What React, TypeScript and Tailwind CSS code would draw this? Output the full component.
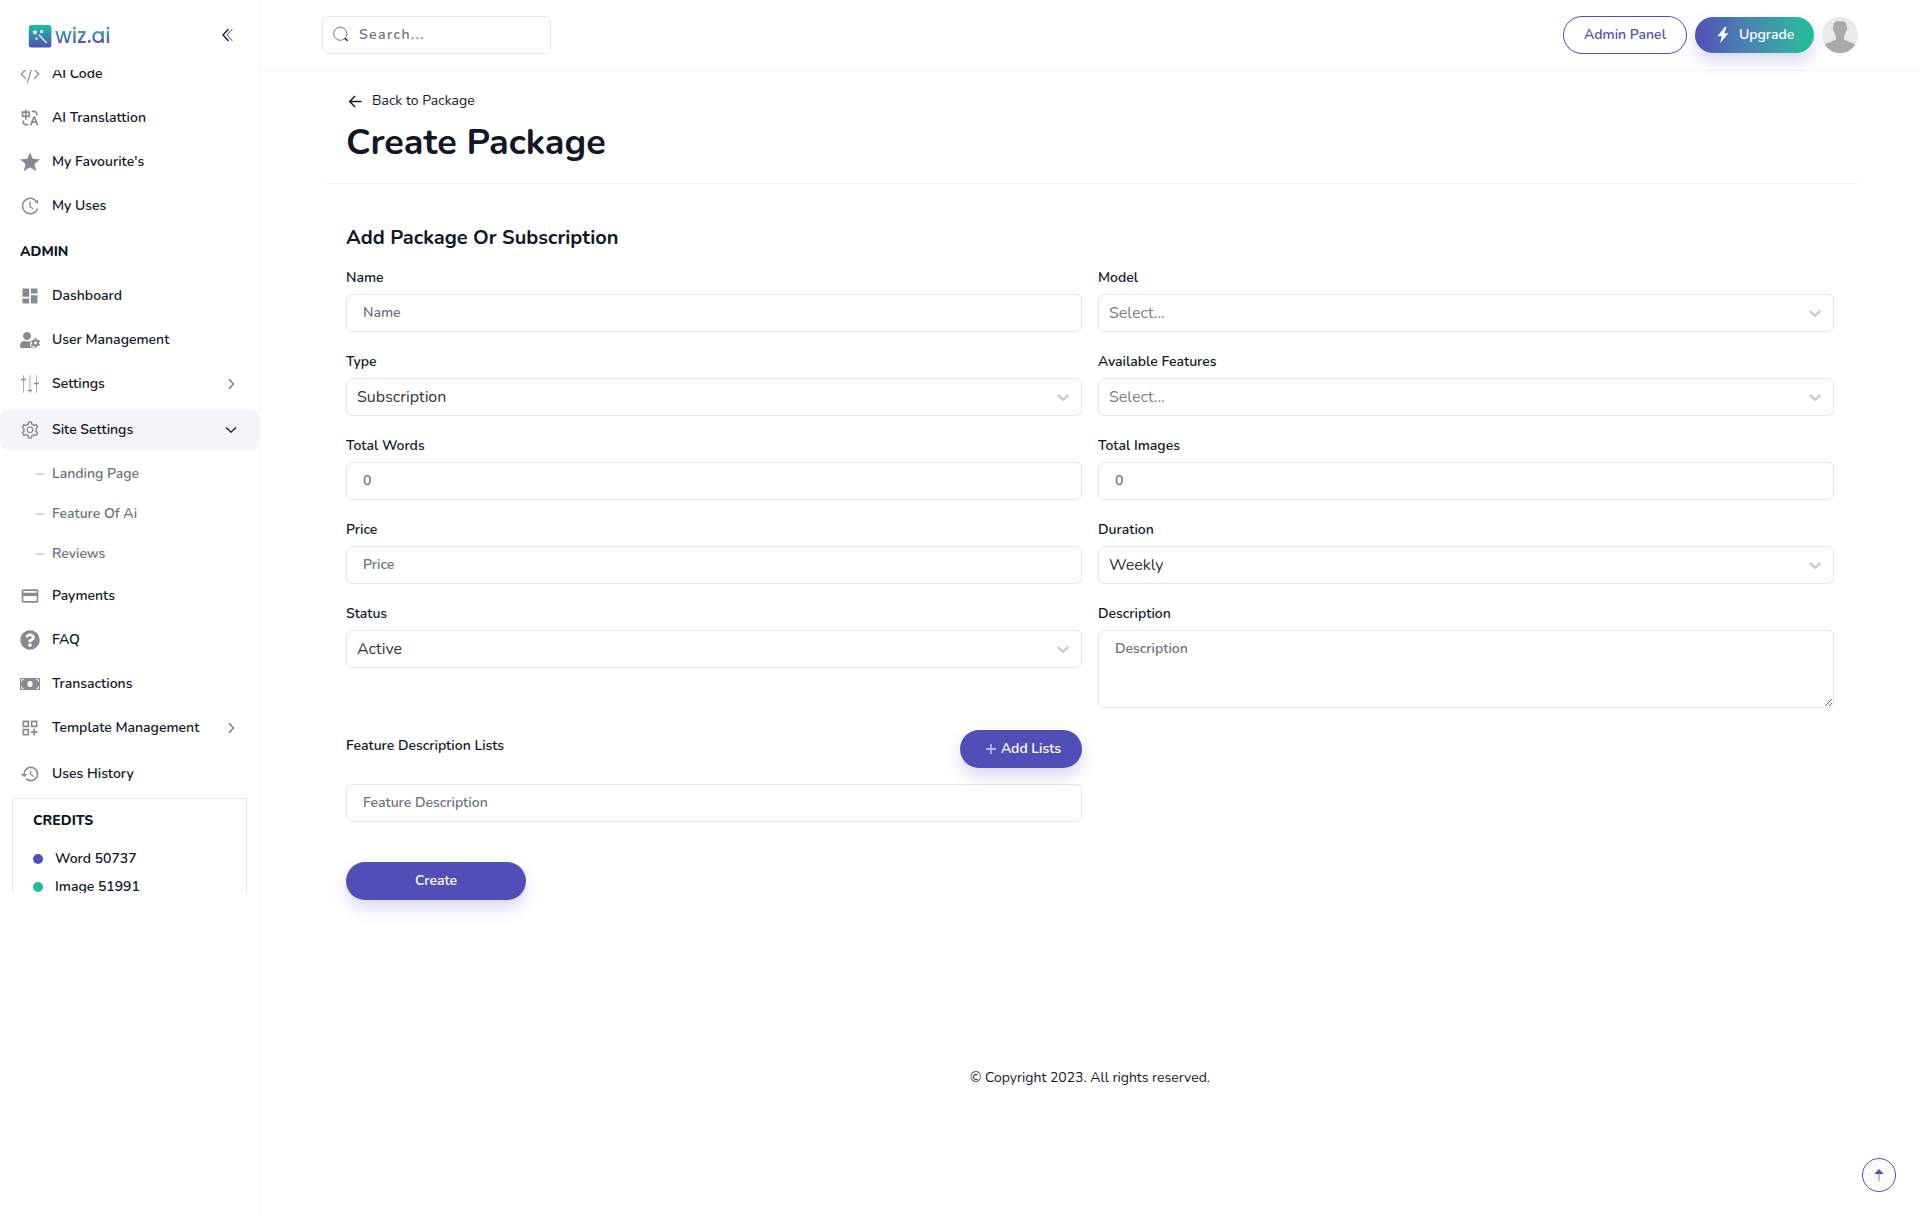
import type { ReactNode } from "react";
import { BsCodeSlash } from "react-icons/bs";
import { RiTranslate } from "react-icons/ri";
import { FaUserCog, FaQuestionCircle } from "react-icons/fa";
import { AiOutlineHistory, AiOutlineSetting } from "react-icons/ai";
import { MdDashboard, MdPayment, MdOutlineDashboardCustomize, MdHistory } from "react-icons/md";

function StarIcon() {
  return (
    <svg width="20" height="20" viewBox="0 0 20 20" fill="currentColor" stroke="currentColor" strokeWidth="0.6" strokeLinejoin="round">
      <path d="M10 0.9l2.500 6.200 6.900.5-5.300 4.400 1.700 6.700L10 15.100l-5.800 3.600 1.700-6.700L.6 7.600l6.900-.5z" />
    </svg>
  );
}

function SlidersIcon() {
  return (
    <svg width="20" height="20" viewBox="0 0 20 20" fill="none" stroke="currentColor">
      <path d="M3.5 1v18M16.5 1v18" strokeOpacity="0.7" />
      <path d="M10 1v18" strokeWidth="2" strokeOpacity="0.35" />
      <path d="M1 5.5h5M8 16.5h4M14 9.5h5" strokeWidth="1.4" />
    </svg>
  );
}

function CashIcon() {
  return (
    <svg width="20" height="20" viewBox="0 0 20 20">
      <rect x="0" y="4" width="20" height="12" rx="0.5" fill="currentColor" />
      <ellipse cx="10" cy="10" rx="2.6" ry="3.1" fill="#fff" />
      <path
        d="M1.7 7.6V5.6h2M18.3 7.6V5.6h-2M1.7 12.4v2h2M18.3 12.4v2h-2"
        fill="none"
        stroke="#fff"
        strokeWidth="1"
      />
    </svg>
  );
}

function ChevronRight() {
  return (
    <svg width="20" height="20" viewBox="0 0 20 20" fill="none" stroke="#64748b" strokeWidth="1.2">
      <path d="M8 5l4.5 5L8 15" />
    </svg>
  );
}

function ChevronDown() {
  return (
    <svg width="20" height="20" viewBox="0 0 20 20" fill="none" stroke="#0f172a" strokeWidth="1.3">
      <path d="M5 7.6l5 4.6 5-4.6" />
    </svg>
  );
}

type ItemProps = { icon: ReactNode; label: string; trailing?: ReactNode; className?: string };

function NavItem({ icon, label, trailing, className = "mb-1" }: ItemProps) {
  return (
    <div className={`flex h-10 shrink-0 items-center rounded-lg pr-[18px] pl-5 ${className}`}>
      <span className="mr-3 flex w-5 justify-center text-xl text-[#868b93]">{icon}</span>
      <span className="grow pb-px text-sm font-semibold text-gray-900">{label}</span>
      {trailing}
    </div>
  );
}

function SubItem({ label }: { label: string }) {
  return (
    <div className="flex h-10 shrink-0 items-center pl-9">
      <span className="mr-2 h-0.5 w-2 rounded bg-gray-300" />
      <span className="pb-px text-sm font-semibold text-gray-500">{label}</span>
    </div>
  );
}

function Logo() {
  return (
    <div className="flex items-center gap-[3px] pt-0.5">
      <svg width="24" height="24" viewBox="0 0 24 24">
        <defs>
          <linearGradient id="logo" x1="0" y1="0" x2="0" y2="1">
            <stop offset="0" stopColor="#1dbf9b" />
            <stop offset="1" stopColor="#524eb7" />
          </linearGradient>
        </defs>
        <rect x="0.8" y="1" width="22.6" height="22.4" rx="2.5" fill="url(#logo)" />
        <path d="M11.4 11.2l7 7.4" stroke="#fff" strokeWidth="1.3" strokeLinecap="round" />
        <path
          d="M7 5.4l.8 1.8 1.9.2-1.4 1.3.4 2L7 9.7l-1.7 1 .4-2-1.4-1.3 1.9-.2zM13.6 5.2l.6 1.4 1.5.2-1.1 1 .3 1.6-1.3-.8-1.4.8.3-1.6-1.1-1 1.6-.2z"
          fill="#fff"
        />
        <circle cx="8.6" cy="14.6" r="1.2" fill="#fff" />
      </svg>
      <span className="bg-linear-to-b from-[#1dbf9b] from-10% to-[#524eb7] to-80% bg-clip-text font-['Poppins','Nunito',sans-serif] text-[20.5px] leading-6 font-medium tracking-[-0.1px] text-transparent">
        wiz.ai
      </span>
    </div>
  );
}

function Sidebar() {
  return (
    <aside className="flex h-[1216px] w-[260px] shrink-0 flex-col border-r border-gray-100">
      <div className="flex h-[70px] shrink-0 items-center justify-between pr-[25px] pl-7">
        <Logo />
        <svg width="14" height="16" viewBox="0 0 14 16" fill="none" strokeWidth="1.3">
          <path d="M8.5 2L3 8l5.500 6" stroke="#0f172a" />
          <path d="M12.500 2L7 8l5.500 6" stroke="#64748b" strokeWidth="1.100" />
        </svg>
      </div>
      <nav className="flex h-[823px] flex-col overflow-hidden">
        <NavItem icon={<BsCodeSlash />} label="AI Code" className="-mt-4 mb-1" />
        <NavItem icon={<RiTranslate />} label="AI Translattion" />
        <NavItem icon={<StarIcon />} label="My Favourite's" />
        <NavItem icon={<AiOutlineHistory />} label="My Uses" />
        <div className="flex h-[46px] shrink-0 items-center pb-0.5 pl-5 text-sm font-extrabold text-gray-900">ADMIN</div>
        <NavItem icon={<MdDashboard />} label="Dashboard" />
        <NavItem icon={<FaUserCog />} label="User Management" />
        <NavItem icon={<SlidersIcon />} label="Settings" trailing={<ChevronRight />} className="mb-1.5" />
        <NavItem icon={<AiOutlineSetting />} label="Site Settings" trailing={<ChevronDown />} className="mb-1 bg-[#f5f4fa]" />
        <div className="mb-0.5 flex flex-col">
          <SubItem label="Landing Page" />
          <SubItem label="Feature Of Ai" />
          <SubItem label="Reviews" />
        </div>
        <NavItem icon={<MdPayment />} label="Payments" />
        <NavItem icon={<FaQuestionCircle />} label="FAQ" />
        <NavItem icon={<CashIcon />} label="Transactions" />
        <NavItem icon={<MdOutlineDashboardCustomize />} label="Template Management" trailing={<ChevronRight />} className="mb-1.5" />
        <NavItem icon={<MdHistory />} label="Uses History" />
        <div className="mr-3 ml-3 shrink-0 border border-gray-200 px-5 pt-2.5 pb-5">
          <h4 className="text-sm leading-6 font-extrabold text-gray-900">CREDITS</h4>
          <div className="mt-3 flex h-7 items-center text-sm font-semibold text-gray-900">
            <span className="mr-3 size-2.5 rounded-full bg-[#524eb7]" />
            <span className="pb-px">Word 50737</span>
          </div>
          <div className="flex h-7 items-center text-sm font-semibold text-gray-900">
            <span className="mr-3 size-2.5 rounded-full bg-[#1dbf9b]" />
            <span className="pb-px">Image 51991</span>
          </div>
        </div>
      </nav>
    </aside>
  );
}

function Header() {
  return (
    <header className="flex h-[71px] items-center justify-between border-b border-gray-100 pr-[62px] pl-[62px]">
      <div className="flex h-[38px] w-[229px] items-center rounded-md border border-slate-200 pl-2.5">
        <svg width="16" height="16" viewBox="0 0 16 16" fill="none" className="mt-[-2px] mr-2.5">
          <circle cx="7.300" cy="7.700" r="6.600" stroke="#64686f" strokeWidth="0.9" />
          <path d="M11.8 12.200l2.700 2.500" stroke="#0f172a" strokeWidth="1.400" />
        </svg>
        <span className="pb-px text-sm font-semibold tracking-[1.4px] text-gray-500">Search...</span>
      </div>
      <div className="flex items-center gap-2">
        <button className="flex h-[38px] w-[124px] items-center justify-center rounded-full border border-[#524eb7] pb-px text-sm font-semibold text-[#524eb7]">
          Admin Panel
        </button>
        <button className="flex h-9 w-[119px] items-center rounded-full bg-linear-to-r from-[#524eb7] to-[#1dbf9b] pl-5 text-sm font-semibold text-white shadow-[0_8px_16px_rgba(82,78,183,0.22)]">
          <svg width="16" height="18" viewBox="0 0 16 18" className="mr-2">
            <path d="M9.800 1L2.500 10.300h4.300L5 17l8.500-9.800H9.300L11.500 1z" fill="#fff" />
          </svg>
          <span className="pb-px">Upgrade</span>
        </button>
        <svg width="36" height="36" viewBox="0 0 36 36" className="rounded-full bg-[#e9e9e9]">
          <path
            d="M11.200 10C11 5.500 13.500 4 18 4s7 1.500 6.800 6c.8.4.5 3-.5 3.600-.4 2.600-1.300 4-2.300 5.200v2.700c0 1.500 1.500 2 4 3 3.500 1.300 5.500 2 7 3.500V36H3v-8c1.500-1.500 3.500-2.200 7-3.500 2.500-1 4-1.500 4-3v-2.700c-1-1.200-1.900-2.600-2.300-5.200-1-.6-1.300-3.200-.5-3.600z"
            fill="#a9a9a9"
          />
        </svg>
      </div>
    </header>
  );
}

function Field({ label, children }: { label: string; children: ReactNode }) {
  return (
    <div className="flex flex-col">
      <label className="mb-1.5 text-sm leading-5 font-semibold text-gray-900">{label}</label>
      {children}
    </div>
  );
}

const inputClass =
  "block w-full rounded-md border border-slate-200 bg-transparent px-4 text-sm font-semibold text-gray-500 outline-none placeholder:text-gray-500";

function Input({ placeholder }: { placeholder: string }) {
  return <input className={`h-[38px] pb-0.5 ${inputClass}`} placeholder={placeholder} />;
}

function Select({ value, empty = false }: { value: string; empty?: boolean }) {
  return (
    <div className="flex h-[38px] items-center justify-between rounded-md border border-slate-200 pr-2 pl-2.5">
      <span className={empty ? "text-base text-[#808080]" : "text-base text-[#333333]"}>{value}</span>
      <svg width="20" height="20" viewBox="0 0 20 20" fill="#cccccc">
        <path d="M4.516 7.548c0.436-0.446 1.043-0.481 1.576 0l3.908 3.747 3.908-3.747c0.533-0.481 1.141-0.446 1.574 0 0.436 0.445 0.408 1.197 0 1.615-0.406 0.418-4.695 4.502-4.695 4.502-0.217 0.223-0.502 0.335-0.787 0.335s-0.570-0.112-0.789-0.335c0 0-4.287-4.084-4.695-4.502s-0.436-1.170 0-1.615z" />
      </svg>
    </div>
  );
}

const primary =
  "flex h-[38px] items-center justify-center rounded-full bg-[#524eb7] text-sm font-semibold text-white shadow-[0_8px_16px_rgba(82,78,183,0.22)]";

export default function App() {
  return (
    <div className="relative flex h-[1216px] w-[1920px] overflow-hidden bg-white font-['Nunito','Lato',sans-serif] text-gray-900">
      <Sidebar />
      <div className="flex grow flex-col">
        <Header />
        <main className="mx-[62px] flex flex-col">
          <div className="flex h-[113px] flex-col border-b border-gray-100 pt-5 pl-6">
            <a className="flex h-5 items-center text-sm text-gray-900">
              <svg width="14" height="14" viewBox="0 0 14 14" fill="none" stroke="#0f172a" strokeWidth="1.500" className="mt-[-1px] mr-2.5 ml-0.5">
                <path d="M13.500 7.500H2M7 2L1.700 7.500 7 13" />
              </svg>
              <span>Back to Package</span>
            </a>
            <h1 className="mt-3 text-4xl leading-[40px] font-bold">Create Package</h1>
          </div>
          <div className="px-6">
            <h2 className="mt-10 mb-4 text-xl leading-7 font-bold">Add Package Or Subscription</h2>
            <div className="grid grid-cols-2 gap-x-4 gap-y-5">
              <Field label="Name"><Input placeholder="Name" /></Field>
              <Field label="Model"><Select value="Select..." empty /></Field>
              <Field label="Type"><Select value="Subscription" /></Field>
              <Field label="Available Features"><Select value="Select..." empty /></Field>
              <Field label="Total Words"><Input placeholder="0" /></Field>
              <Field label="Total Images"><Input placeholder="0" /></Field>
              <Field label="Price"><Input placeholder="Price" /></Field>
              <Field label="Duration"><Select value="Weekly" /></Field>
              <Field label="Status"><Select value="Active" /></Field>
              <Field label="Description">
                <textarea className={`h-[78px] pt-2 ${inputClass}`} placeholder="Description" />
              </Field>
            </div>
            <div className="mt-[22px] w-[736px]">
              <div className="flex h-[54px] items-start justify-between">
                <span className="mt-1.5 text-sm font-semibold">Feature Description Lists</span>
                <button className={`w-[122px] pl-1 ${primary}`}>
                  <svg width="12" height="12" viewBox="0 0 12 12" stroke="#fff" strokeOpacity="0.75" strokeWidth="1.300" className="mr-1">
                    <path d="M6 1v10M1 6h10" />
                  </svg>
                  Add Lists
                </button>
              </div>
              <Input placeholder="Feature Description" />
            </div>
            <button className={`mt-10 w-[180px] ${primary}`}>Create</button>
          </div>
          <footer className="mt-[168px] text-center text-sm">© Copyright 2023. All rights reserved.</footer>
        </main>
      </div>
      <button className="absolute right-6 bottom-6 flex size-[34px] items-center justify-center rounded-full border border-[#524eb7] bg-[#fafafa]">
        <svg width="12" height="14" viewBox="0 0 12 14">
          <path d="M5 5h2v8H5z" fill="#524eb7" fillOpacity="0.35" />
          <path d="M6 1l4.700 5H1.300z" fill="#524eb7" />
        </svg>
      </button>
    </div>
  );
}
